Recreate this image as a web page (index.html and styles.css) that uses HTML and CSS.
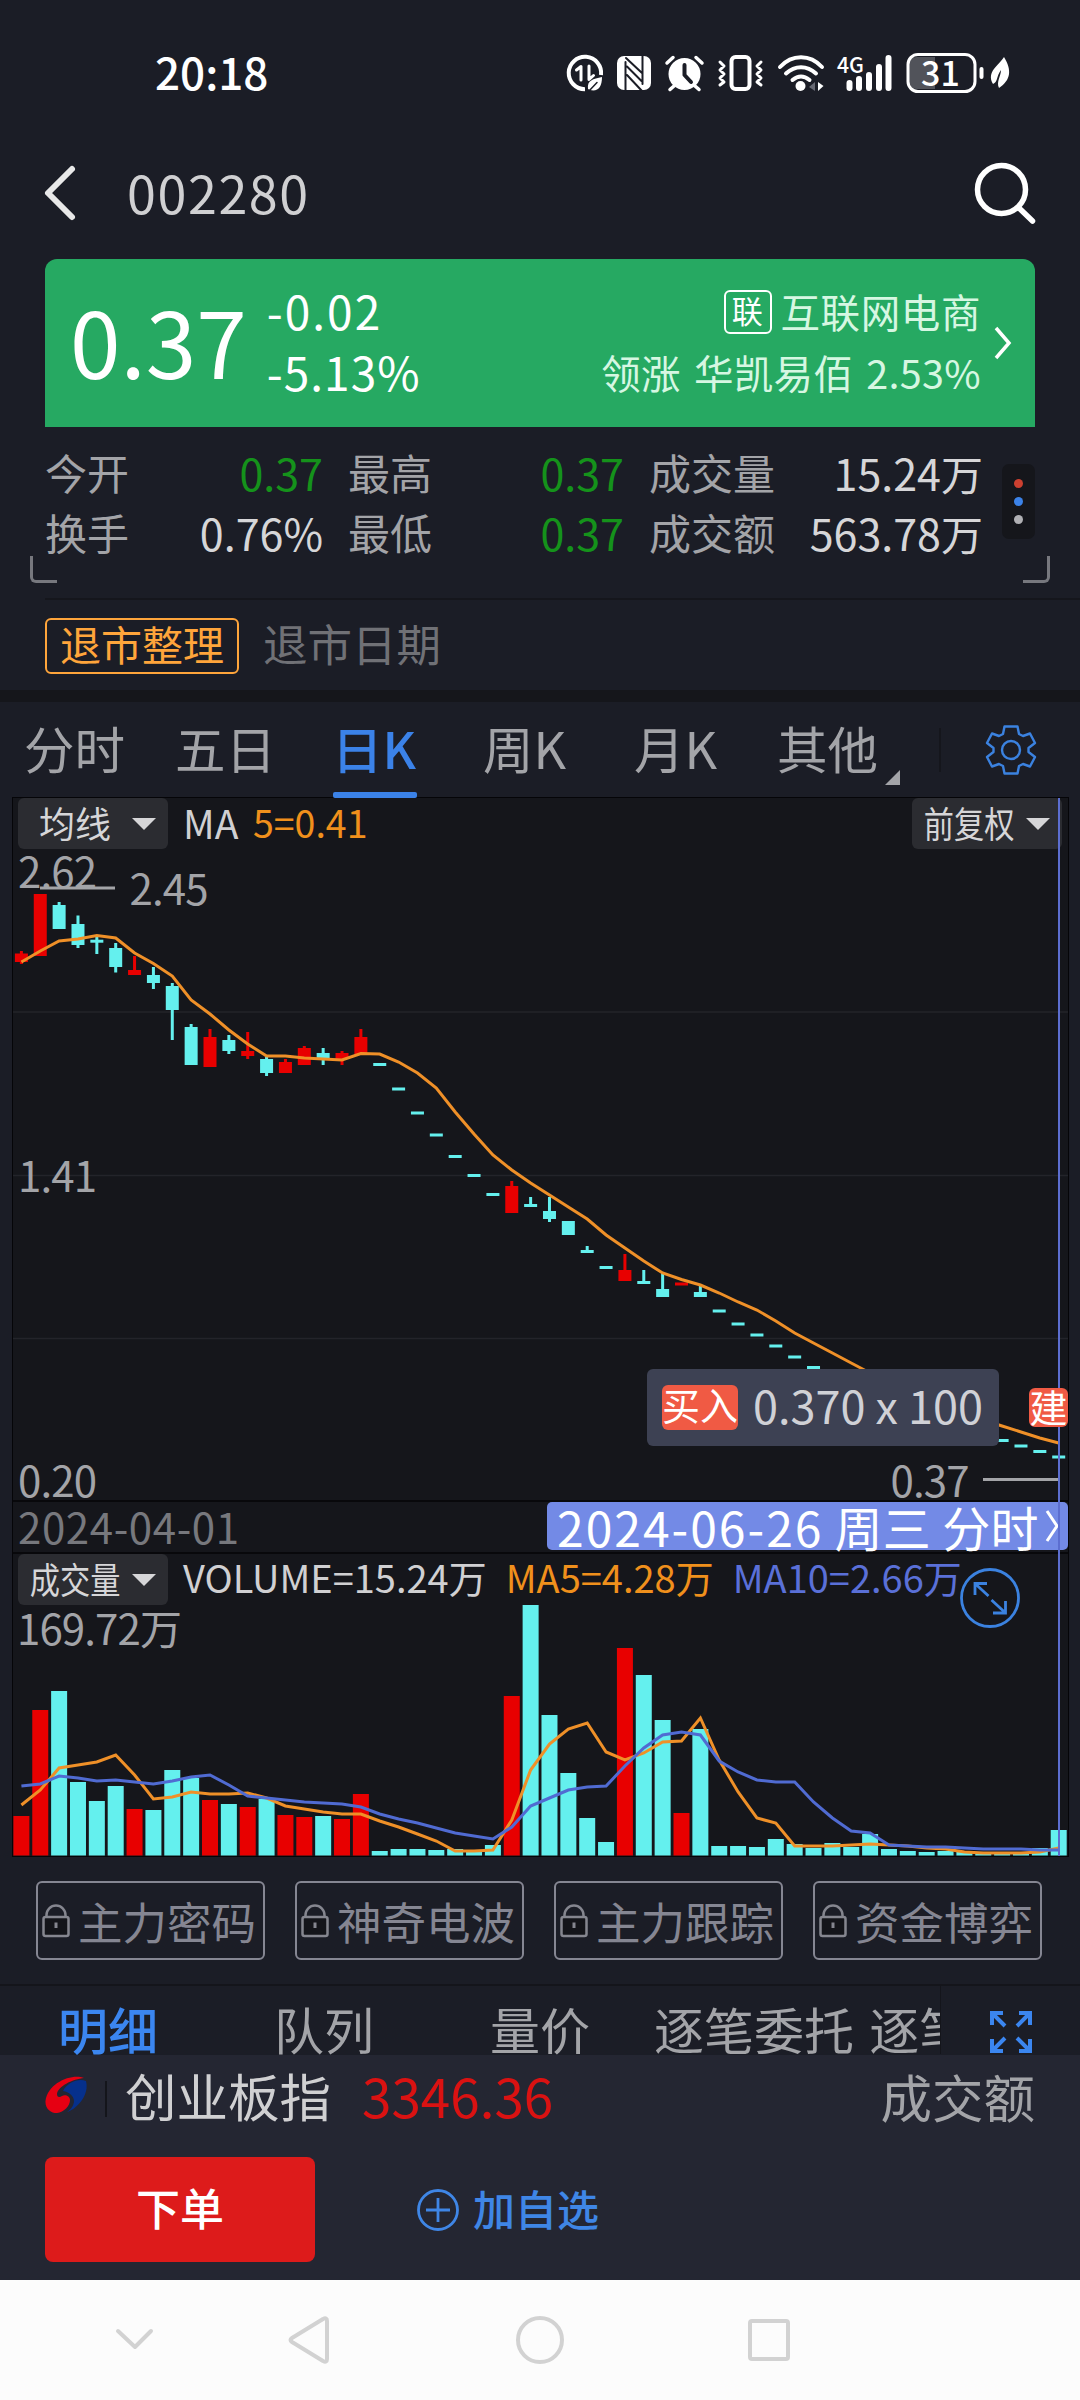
FILE: index.html
```
<!DOCTYPE html>
<html lang="zh-CN">
<head>
    <meta charset="UTF-8">
    <meta name="viewport" content="width=device-width, initial-scale=1.0">
    <title>002280</title>
    <link rel="stylesheet" href="styles.css">
</head>
<body>
    <!-- status bar -->
    <div class="status-bar">
        <span class="clock">20:18</span>
        <svg class="status-icons" width="450" height="44" viewBox="564 51 450 44" fill="none" stroke="#fff" stroke-linecap="round" stroke-linejoin="round">
            <!-- data saver -->
            <path d="M585 89.200A16.200 16.200 0 1 1 601 75" stroke-width="4" stroke-linecap="butt"/>
            <path d="M576.500 70L581 66.500V80M589 66V79.500L593.500 75.500" stroke-width="3"/>
            <path d="M588 89C587 80 593 79 602 77C602 87 598 92 590 90Z" fill="#fff" stroke="none"/>
            <path d="M589 91L597 82.500" stroke="#1b1d26" stroke-width="1.500"/>
            <!-- nfc -->
            <rect x="617" y="56" width="34" height="34" rx="7" fill="#fff" stroke="none"/>
            <path d="M625.500 62V91M642.500 55V84M626 58L642 73M627 66.500L641.500 81M627 75L642 91" stroke="#1b1d26" stroke-width="2"/>
            <!-- alarm -->
            <circle cx="684.500" cy="74" r="16" fill="#fff" stroke="none"/>
            <path d="M667 63L673 57.500M702 63L696 57.500M674 86L670 89.500M695 86L699 89.500" stroke-width="3.500"/>
            <path d="M684.500 65V75L691 82" stroke="#1b1d26" stroke-width="4"/>
            <!-- vibrate -->
            <rect x="731.500" y="57" width="18" height="32" rx="4" stroke-width="4"/>
            <path d="M720 62L724 66L720 70L724 74L720 78L724 82L720 85M761 62L757 66L761 70L757 74L761 78L757 82L761 85" stroke-width="3"/>
            <!-- wifi -->
            <path d="M780 67C792 54 810 54 822 67M786 73.500C795 65 807 65 816 73.500M792.500 80C798 75.500 804 75.500 809.500 80" stroke-width="4"/>
            <circle cx="800.500" cy="86" r="5" fill="#fff" stroke="none"/>
            <path d="M809 87L815 82V91Z" stroke="none" fill="#666872"/>
            <path d="M818 82V91L823.500 86Z" fill="#fff" stroke="none"/>
            <!-- signal -->
            <path d="M849.500 83V88M859 79V88M869 75V88M879 67V88M888.500 58V88" stroke-width="6"/>
            <!-- battery -->
            <path d="M935 57H917Q909 57 909 65V80Q909 89 917 89H935Z" fill="#51535a" stroke="none"/>
            <rect x="908" y="54.500" width="67" height="37" rx="10" stroke-width="3"/>
            <path d="M981.500 69V77" stroke-width="4"/>
            <path d="M1004 57C1012 70 1011 80 999 88C996 82 1001 76 1001 70C996 77 998 82 993 84C986 72 999 65 1004 57Z" fill="#fff" stroke="none"/>
            <g fill="#fff" stroke="none">
                <text x="837" y="73" font-size="22" font-weight="500" textLength="27" lengthAdjust="spacingAndGlyphs">4G</text>
                <text x="921" y="85.500" font-size="34" font-weight="500" textLength="39">31</text>
            </g>
        </svg>
    </div>

    <!-- header -->
    <div class="header">
        <svg width="34" height="60" viewBox="43 163 34 60" fill="none" stroke="#e8e8e8" stroke-width="6" stroke-linecap="round" stroke-linejoin="round"><path d="M72 169L48 193L72 217"/></svg>
        <span class="code">002280</span>
        <svg class="search" width="64" height="64" viewBox="973 161 64 64" fill="none" stroke="#fff" stroke-width="5.500" stroke-linecap="round"><circle cx="1001.500" cy="189.500" r="24"/><path d="M1019 208L1032.500 221"/></svg>
    </div>

    <!-- quote -->
    <div class="quote">
        <div class="price">0.37</div>
        <div class="change">
            <span>-0.02</span>
            <span>-5.13%</span>
        </div>
        <div class="sector">
            <div class="sector-name"><span class="badge">联</span>互联网电商</div>
            <div class="leader">领涨 华凯易佰 <span>2.53%</span></div>
        </div>
        <svg width="20" height="36" viewBox="0 0 20 36" fill="none" stroke="#fff" stroke-width="3.500"><path d="M3 3L16 18L3 33"/></svg>
    </div>
    <div class="stats">
        <div class="stats-grid">
            <span>今开</span><b class="down">0.37</b><span class="gap">最高</span><b class="down">0.37</b><span class="gap">成交量</span><b>15.24<i>万</i></b>
            <span>换手</span><b>0.76%</b><span class="gap">最低</span><b class="down">0.37</b><span class="gap">成交额</span><b>563.78<i>万</i></b>
        </div>
        <div class="dots"><i></i><i></i><i></i></div>
        <div class="corner left"></div>
        <div class="corner right"></div>
    </div>
    <div class="notice">
        <span class="tag">退市整理</span>
        <span class="notice-text">退市日期</span>
    </div>

    <!-- period tabs -->
    <div class="tabs">
        <span>分时</span>
        <span>五日</span>
        <span class="active">日K</span>
        <span>周K</span>
        <span>月K</span>
        <span class="more">其他</span>
        <div class="setting">
            <svg width="52" height="52" viewBox="-26 -26 52 52" fill="none" stroke="#3b82e0" stroke-width="2.400" stroke-linejoin="round"><circle r="9"/><path d="M-6.500 -23.500H6.500L8 -16L12 -14L19 -16.500L24 -7L17.500 -2V2L24 7L19 16.500L12 14L8 16L6.500 23.500H-6.500L-8 16L-12 14L-19 16.500L-24 7L-17.500 2V-2L-24 -7L-19 -16.500L-12 -14L-8 -16Z"/></svg>
        </div>
    </div>

    <!-- charts -->
    <div class="charts">
        <div class="kline">
            <div class="chart-head">
                <span class="select"><em class="wide">均线</em></span>
                <span class="ma">MA</span>
                <span class="ma5">5=0.41</span>
                <span class="select right"><em>前复权</em></span>
            </div>
            <svg id="kline" width="1055" height="704" viewBox="13 798 1055 704">
                <path d="M13 1012H1068M13 1175.500H1068M13 1338.500H1068" stroke="#23242a" stroke-width="1.500"/>
                <g id="candles"></g>
                <polyline id="ma5" fill="none" stroke="#ef9028" stroke-width="3"/>
                <path d="M40 888H115M983 1479.500H1058" stroke="#a3a4a8" stroke-width="3"/>
                <g fill="#a3a4a8" font-size="42">
                    <text x="18" y="887.500" textLength="79">2.62</text>
                    <text x="129.500" y="905" textLength="79">2.45</text>
                    <text x="18" y="1192" textLength="79">1.41</text>
                    <text x="18" y="1496.500" textLength="79">0.20</text>
                    <text x="890.500" y="1496.500" textLength="79">0.37</text>
                </g>
            </svg>
            <div class="trade">
                <span class="buy">买入</span>
                <span>0.370 x 100</span>
            </div>
            <span class="build">建</span>
        </div>
        <div class="dates">
            <span>2024-04-01</span>
            <span class="picked"><b>2024-06-26</b> 周三 分时<svg width="16" height="34" viewBox="0 0 16 34" fill="none" stroke="#fff" stroke-width="3"><path d="M3 2L13 17L3 32"/></svg></span>
        </div>
        <div class="volume">
            <div class="chart-head">
                <span class="select"><em>成交量</em></span>
                <span class="vol">VOLUME=15.24万</span>
                <span class="ma5">MA5=4.28万</span>
                <span class="ma10">MA10=2.66万</span>
            </div>
            <svg width="1055" height="302" viewBox="13 1554 1055 302">
                <g id="bars"></g>
                <polyline id="vol5" fill="none" stroke="#ef9028" stroke-width="3"/>
                <polyline id="vol10" fill="none" stroke="#506bd2" stroke-width="3"/>
                <text x="17" y="1645" fill="#a3a4a8" font-size="42" textLength="165">169.72万</text>
                <g fill="none" stroke="#3b82e0" stroke-width="2.800"><circle cx="990" cy="1598" r="28.500"/><path d="M975 1595V1583.500H987M975.500 1584L988.500 1596M993 1613H1005.500V1601M1005 1612.500L991.500 1600"/></g>
            </svg>
        </div>
        <div class="cursor"></div>
    </div>

    <!-- locked indicators -->
    <div class="locks">
        <div class="lock"><svg width="28" height="34" viewBox="0 0 28 34"><use href="#lock"/></svg>主力密码</div>
        <div class="lock"><svg width="28" height="34" viewBox="0 0 28 34"><use href="#lock"/></svg>神奇电波</div>
        <div class="lock"><svg width="28" height="34" viewBox="0 0 28 34"><use href="#lock"/></svg>主力跟踪</div>
        <div class="lock"><svg width="28" height="34" viewBox="0 0 28 34"><use href="#lock"/></svg>资金博弈</div>
    </div>
    <svg class="defs" width="0" height="0">
        <symbol id="lock" viewBox="0 0 28 34"><g fill="none" stroke="#85868f" stroke-width="2.500"><path d="M4.500 13V11A9.500 9.500 0 0 1 23.500 11V13"/><rect x="1.500" y="13" width="25" height="19" rx="2" fill="#14151a"/><path d="M14 18.500V24" stroke-width="3"/></g></symbol>
    </svg>

    <!-- detail tabs -->
    <div class="detail-tabs">
        <span class="active">明细</span>
        <span>队列</span>
        <span>量价</span>
        <span class="cut">逐笔委托 逐笔</span>
        <svg width="44" height="44" viewBox="0 0 44 44" fill="none" stroke="#3b86f0" stroke-width="4"><path d="M3 15V3H14M4 4L16 16M30 3H41V15M40 4L28 16M3 29V41H14M4 40L16 28M30 41H41V29M40 40L28 28"/></svg>
    </div>

    <!-- bottom bar -->
    <div class="bottom">
        <div class="index-row">
            <svg width="42" height="38" viewBox="0 0 42 38"><path d="M39 2C28 -3 3 6 0.500 25C0 33 6 37 12 37C19 36 25 30 25 24C25 20 20 18 17 20C14 22 12 21 12 18C13 10 28 3 39 2Z" fill="#e60012"/><path d="M41 5C33 2 22 7 18 15C24 16 29 20 29 25C29 30 25 34 22 36C32 33 43 20 41.500 8Z" fill="#06308c"/></svg>
            <span class="index-name">创业板指</span>
            <span class="index-value">3346.36</span>
            <span class="turnover">成交额</span>
        </div>
        <div class="actions">
            <button class="order">下单</button>
            <span class="add"><svg width="44" height="44" viewBox="0 0 44 44" fill="none" stroke="#3f86e6" stroke-width="2.800"><circle cx="22" cy="22" r="19.500"/><path d="M10 22H34M22 10V34"/></svg><span>加自选</span></span>
        </div>
    </div>

    <!-- system navigation -->
    <div class="nav">
        <svg width="1080" height="120" viewBox="0 2280 1080 120" fill="none" stroke="#d2d2d2" stroke-width="4" stroke-linecap="round" stroke-linejoin="round">
            <path d="M118 2331L135 2347L151 2331"/>
            <path d="M327 2321V2359Q327 2363 323 2361L292 2342Q289 2340 292 2338L323 2319Q327 2317 327 2321Z"/>
            <circle cx="540" cy="2340" r="22"/>
            <rect x="750" y="2321" width="38" height="38" rx="2"/>
        </svg>
    </div>

    <script>
        var STEP = 18.86;
        var FIRST = 21.4;
        var COLORS = { r: '#e80000', c: '#64f0ee' };

        // color, high, body top, body bottom, low
        var candles = [
            ['r', 951, 953.5, 962, 964], ['r', 894, 894, 956, 956], ['c', 902, 905, 929, 929], ['c', 915.5, 924, 945, 948],
            ['c', 937, 939.7, 942.7, 954], ['c', 943, 948, 967, 972.5], ['r', 956, 970, 975, 975], ['c', 967, 975, 983, 989],
            ['c', 983, 986, 1010, 1040], ['c', 1024, 1027, 1065, 1065], ['r', 1029, 1037, 1067, 1067], ['c', 1035, 1040, 1051, 1054],
            ['r', 1032, 1051, 1056, 1059], ['c', 1057, 1059, 1073, 1076], ['r', 1059, 1062, 1073, 1073], ['r', 1046, 1048, 1065, 1065],
            ['c', 1048, 1053, 1059, 1065], ['r', 1051, 1053, 1059, 1065], ['r', 1029, 1037, 1054, 1054], ['c', 1064.5],
            ['c', 1089], ['c', 1113], ['c', 1135], ['c', 1156.5], ['c', 1175.5], ['c', 1194.5],
            ['r', 1181, 1186, 1213, 1213], ['c', 1197, 1204, 1207, 1207], ['c', 1197, 1211, 1219, 1222], ['c', 1221, 1221, 1235, 1235],
            ['c', 1246, 1250, 1253, 1253], ['c', 1267.5], ['r', 1254, 1270, 1281, 1281], ['c', 1270, 1281, 1284, 1284],
            ['c', 1273, 1289, 1297, 1297], ['r', 1284], ['c', 1286, 1292, 1297, 1297], ['c', 1311], ['c', 1324], ['c', 1335],
            ['c', 1346], ['c', 1357], ['c', 1367.5], ['c', 1376], ['c', 1384], ['c', 1392], ['c', 1400], ['c', 1408],
            ['c', 1416], ['c', 1423], ['c', 1430], ['c', 1436], ['c', 1440.5], ['c', 1446], ['c', 1451.5], ['c', 1457]
        ];
        var ma5 = [962, 951, 941, 939, 935.5, 938, 953, 963.5, 976, 1000, 1014, 1030, 1044, 1056, 1056, 1058, 1059, 1060, 1053.5, 1054,
            1062, 1073, 1088, 1112, 1134, 1155, 1170, 1183, 1195, 1207, 1219, 1235, 1248, 1261, 1273, 1279.5, 1285, 1293, 1302, 1310,
            1321, 1333, 1343, 1353, 1363, 1373, 1382, 1391, 1399, 1407, 1414, 1420, 1426, 1432, 1438, 1443];
        var volumes = ['r1816', 'r1710', 'c1691', 'c1782', 'c1801', 'c1786', 'r1809', 'c1810', 'c1770', 'c1778', 'r1800', 'c1804', 'r1807', 'c1799',
            'r1815', 'r1817', 'c1816', 'r1819', 'r1794', 'c1851', 'c1849', 'c1849', 'c1850', 'c1849', 'c1851', 'c1845', 'r1696', 'c1605',
            'c1715', 'c1773', 'c1818', 'c1842', 'r1648', 'c1675', 'c1720', 'r1813', 'c1729', 'c1846', 'c1846', 'c1847', 'c1839', 'c1844',
            'c1848', 'c1843', 'c1847', 'c1834', 'c1849', 'c1851', 'c1852', 'c1851', 'c1852', 'c1853', 'c1852', 'c1852', 'c1848', 'c1830'];
        var vol5 = [1805, 1790, 1768, 1765, 1762, 1755, 1775, 1799, 1797, 1792, 1794, 1794, 1793, 1798, 1806, 1809, 1812, 1814, 1814, 1821,
            1827, 1834, 1841, 1851, 1851, 1850, 1820, 1770, 1744, 1729, 1723, 1752, 1760, 1753, 1742, 1741, 1718, 1760, 1792, 1818,
            1823, 1846, 1846, 1846, 1845, 1844, 1845, 1846, 1848, 1849, 1852, 1853, 1853, 1853, 1852, 1848];
        var vol10 = [1786, 1784, 1776, 1778, 1781, 1780, 1782, 1784, 1781, 1777, 1775, 1785, 1796, 1798, 1800, 1802, 1803, 1804, 1807, 1814,
            1819, 1823, 1828, 1833, 1836, 1839, 1827, 1806, 1798, 1790, 1787, 1786, 1766, 1748, 1735, 1732, 1735, 1761, 1772, 1780,
            1782, 1782, 1802, 1818, 1831, 1833, 1845, 1846, 1847, 1847, 1848, 1849, 1849, 1849, 1850, 1850];

        function rect(x, y, w, h, color) {
            return '<rect x="' + x + '" y="' + y + '" width="' + w + '" height="' + h + '" fill="' + color + '"/>';
        }

        function drawLine(id, values) {
            var points = values.map(function(y, i) {
                return (FIRST + i * STEP).toFixed(1) + ',' + y;
            });
            document.getElementById(id).setAttribute('points', points.join(' '));
        }

        document.getElementById('candles').innerHTML = candles.map(function(c, i) {
            var x = FIRST + i * STEP;
            if (c.length === 2) {
                return rect(x - 6.5, c[1] - 1.5, 13, 3, COLORS[c[0]]);
            }
            return rect(x - 1.5, c[1], 3, c[4] - c[1], COLORS[c[0]]) + rect(x - 6.5, c[2], 13, c[3] - c[2], COLORS[c[0]]);
        }).join('');

        document.getElementById('bars').innerHTML = volumes.map(function(v, i) {
            var y = Number(v.slice(1));
            return rect(FIRST + i * STEP - 8, y, 16, 1855.5 - y, COLORS[v[0]]);
        }).join('');

        drawLine('ma5', ma5);
        drawLine('vol5', vol5);
        drawLine('vol10', vol10);
    </script>
</body>
</html>
```
FILE: styles.css
```
* {
    box-sizing: border-box;
}
body {
    width: 1080px;
    height: 2400px;
    margin: 0;
    overflow: hidden;
    background-color: #1b1d26;
    color: #a3a4a8;
    font-family: "Noto Sans CJK SC", sans-serif;
    font-size: 42px;
}
svg {
    display: block;
    flex: none;
}
b, i, em {
    font-style: normal;
    font-weight: 400;
}
.defs {
    height: 0;
}

/* status bar */
.status-bar {
    display: flex;
    justify-content: space-between;
    height: 146px;
    padding: 51px 66px 0 155px;
}
.clock {
    color: #fff;
    font-size: 44px;
    font-weight: 500;
    line-height: 40px;
}

/* header */
.header {
    display: flex;
    align-items: center;
    height: 113px;
    padding: 0 43px 19px;
}
.code {
    margin: -3px 0 0 50px;
    color: #d0d0d2;
    font-size: 52px;
    line-height: 60px;
    letter-spacing: 1.600px;
}
.search {
    margin-left: auto;
}

/* quote */
.quote {
    display: flex;
    align-items: center;
    height: 168px;
    margin: 0 45px;
    padding: 0 22px 0 25px;
    border-radius: 12px 12px 0 0;
    background-color: #26a962;
    color: #fff;
}
.price {
    font-size: 91px;
    line-height: 130px;
    margin-top: -9px;
}
.change {
    display: flex;
    flex-direction: column;
    margin: -4px 0 0 20px;
    font-size: 46px;
    line-height: 61px;
    letter-spacing: 1px;
}
.change span:first-child {
    letter-spacing: 2px;
}
.sector {
    margin: -5px 12px 0 auto;
    color: #d6f7e2;
    font-size: 39.500px;
    line-height: 61px;
    text-align: right;
}
.sector-name {
    display: flex;
    align-items: center;
    justify-content: flex-end;
    letter-spacing: .600px;
}
.badge {
    width: 48px;
    height: 44px;
    margin: 3px 9px 0 0;
    border: 2px solid #fff;
    border-radius: 6px;
    color: #fff;
    font-size: 31px;
    line-height: 36px;
    text-align: center;
}
.leader {
    letter-spacing: .300px;
    word-spacing: 4px;
}

/* stats */
.stats {
    position: relative;
    display: flex;
    height: 173px;
    margin-left: 45px;
    padding-top: 15px;
    border-bottom: 2px solid #15161c;
}
.stats-grid {
    display: grid;
    grid-template-columns: 86px 192px 110px 191px 153px 206px;
    grid-auto-rows: 60px;
    width: 938px;
    line-height: 60px;
    white-space: nowrap;
}
.stats-grid b {
    color: #d6d6d8;
    font-size: 43px;
    text-align: right;
}
.stats-grid .gap {
    padding-left: 25px;
}
.stats-grid i {
    font-size: 42px;
}
.stats-grid .down {
    color: #15921b;
}
.dots {
    display: flex;
    flex-direction: column;
    align-items: center;
    justify-content: center;
    gap: 9px;
    width: 33px;
    height: 75px;
    margin: 22px 0 0 19px;
    border-radius: 7px;
    background-color: #15161b;
}
.dots i {
    width: 9px;
    height: 9px;
    border-radius: 50%;
    background-color: #cc4030;
}
.dots i:nth-child(2) {
    background-color: #3b82e8;
}
.dots i:nth-child(3) {
    background-color: #b0b0b4;
}
.corner {
    position: absolute;
    top: 129px;
    width: 27px;
    height: 27px;
    border: 0 solid #77787e;
    border-bottom-width: 3px;
}
.corner.left {
    left: -15px;
    border-left-width: 3px;
    border-bottom-left-radius: 6px;
}
.corner.right {
    right: 30px;
    border-right-width: 3px;
    border-bottom-right-radius: 6px;
}

/* notice */
.notice {
    display: flex;
    align-items: center;
    height: 102px;
    padding: 2px 45px 0;
    border-bottom: 12px solid #15161b;
}
.tag {
    width: 194px;
    height: 56px;
    border: 2px solid #ffa53b;
    border-radius: 6px;
    color: #ffa53b;
    font-size: 41px;
    line-height: 47px;
    text-align: center;
}
.notice-text {
    margin: -6px 0 0 24px;
    color: #707176;
    font-size: 44.500px;
    line-height: 56px;
}

/* period tabs */
.tabs {
    display: flex;
    align-items: center;
    height: 95px;
    padding-left: 24px;
    font-size: 50.500px;
}
.tabs span {
    position: relative;
    width: 151px;
    height: 95px;
    line-height: 91px;
}
.tabs .active {
    color: #3b82e8;
    font-weight: 500;
}
.tabs span:nth-child(2) {
    width: 157px;
}
.tabs span.active::after {
    content: "";
    position: absolute;
    z-index: 2;
    left: 1px;
    bottom: -1px;
    width: 84px;
    height: 6px;
    border-radius: 2px;
    background-color: #3b82e8;
}
.tabs .more {
    width: 122px;
    margin-left: -9px;
}
.tabs span:nth-child(5) {
    width: 152px;
}
.tabs .more::after {
    content: "";
    position: absolute;
    right: -1px;
    bottom: 12px;
    border-left: 15px solid transparent;
    border-bottom: 15px solid #a3a4a8;
}
.setting {
    display: flex;
    align-items: center;
    justify-content: flex-end;
    width: 98px;
    height: 44px;
    margin-left: auto;
    margin-right: 43px;
    border-left: 2px solid #15161c;
}

/* charts */
.charts {
    position: relative;
    width: 1057px;
    height: 1060px;
    margin-left: 12px;
    border: 1px solid #050508;
    background-color: #15161b;
}
.kline {
    position: relative;
    height: 704px;
    border-bottom: 2px solid #08080b;
    overflow: hidden;
}
.chart-head {
    position: absolute;
    left: 5px;
    right: 6px;
    top: 0;
    display: flex;
    height: 51px;
    font-size: 38px;
    line-height: 48px;
    white-space: nowrap;
}
.volume .chart-head {
    line-height: 45px;
}
.chart-head .ma,
.chart-head .vol {
    margin-left: 15px;
    color: #d0d0d2;
}
.chart-head .ma {
    width: 70px;
    font-size: 39px;
}
.chart-head .ma5 {
    color: #f0901c;
}
.kline .ma5 {
    font-size: 37.500px;
}
.volume .ma5 {
    margin-left: 19px;
}
.chart-head .ma10 {
    margin-left: 19px;
    color: #5a70d8;
}
.select {
    display: flex;
    align-items: center;
    width: 150px;
    border-radius: 6px;
    background-color: #2b2c31;
    color: #d6d6d8;
    font-size: 36px;
    line-height: 46px;
}
.select em {
    width: 114px;
    padding-left: 14px;
    transform: scaleX(.84);
    transform-origin: 0 0;
    height: 50px;
}
.select em.wide {
    padding-left: 21px;
    transform: none;
}
.select::after {
    content: "";
    border: 12px solid transparent;
    border-top-color: #d6d6d8;
    border-bottom: 0;
}
.select.right {
    margin-left: auto;
}
.trade {
    position: absolute;
    left: 634px;
    top: 571px;
    display: flex;
    align-items: center;
    gap: 15px;
    width: 352px;
    height: 77px;
    padding-left: 15px;
    border-radius: 6px;
    background-color: #3d4153;
    color: #d0d1d6;
    font-size: 45px;
    line-height: 71px;
    white-space: nowrap;
}
.trade span:last-child {
    height: 77px;
}
.buy,
.build {
    width: 76px;
    height: 45px;
    border-radius: 6px;
    background-color: #f05a44;
    color: #fff;
    font-size: 38px;
    line-height: 38px;
    text-align: center;
}
.build {
    position: absolute;
    z-index: 3;
    left: 1016px;
    top: 590px;
    width: 39px;
    height: 39px;
    line-height: 35px;
}
.dates {
    display: flex;
    justify-content: space-between;
    height: 52px;
    padding-left: 5px;
    border-bottom: 2px solid #08080b;
    color: #77787d;
    line-height: 48px;
    letter-spacing: .600px;
}
.picked {
    display: flex;
    align-items: center;
    width: 521px;
    height: 48px;
    padding-left: 10px;
    border-radius: 5px;
    background-color: #738ae6;
    color: #fff;
    font-size: 48px;
    line-height: 38px;
    letter-spacing: .300px;
    white-space: pre;
}
.picked b {
    letter-spacing: 2px;
}
.picked svg {
    margin-left: 5px;
}
.volume {
    position: relative;
    height: 302px;
}
.cursor {
    position: absolute;
    left: 1045px;
    top: 0;
    width: 2px;
    height: 1058px;
    background-color: #5c6ed0;
}

/* locked indicators */
.locks {
    display: flex;
    gap: 30px;
    height: 129px;
    padding: 24px 36px 0;
    border-bottom: 2px solid #14151b;
}
.lock {
    display: flex;
    align-items: center;
    gap: 8px;
    width: 229px;
    height: 79px;
    padding-left: 4px;
    border: 2px solid #858692;
    border-radius: 6px;
    color: #858692;
    font-size: 44.500px;
    line-height: 69px;
    white-space: nowrap;
}

/* detail tabs */
.detail-tabs {
    display: flex;
    align-items: center;
    height: 69px;
    padding-left: 58px;
    font-size: 50px;
    line-height: 87px;
    overflow: hidden;
}
.detail-tabs span {
    width: 216px;
    height: 69px;
    margin-top: -2px;
}
.detail-tabs .active {
    color: #3b86f0;
    font-weight: 500;
}
.detail-tabs span:nth-child(3) {
    width: 164px;
}
.detail-tabs .cut {
    width: 287px;
    overflow: hidden;
    white-space: nowrap;
    word-spacing: 4px;
    border-right: 1px solid #14151b;
}
.detail-tabs svg {
    margin: 23px 0 0 48px;
}

/* bottom bar */
.bottom {
    height: 225px;
    padding: 0 45px;
    background-color: #242632;
}
.index-row {
    display: flex;
    align-items: center;
    height: 102px;
    padding-bottom: 22px;
    font-size: 51.500px;
}
.index-name {
    margin-left: 18px;
    padding-left: 20px;
    color: #d0d0d2;
    background: linear-gradient(#14151b, #14151b) 0 60% / 2px 36px no-repeat;
    line-height: 78px;
}
.index-value {
    margin-left: 31px;
    color: #da1212;
    font-size: 53px;
}
.turnover {
    margin-left: auto;
}
.actions {
    display: flex;
    align-items: center;
}
.order {
    width: 270px;
    height: 105px;
    padding: 0 0 5px;
    border: none;
    border-radius: 8px;
    background-color: #dd1b1b;
    color: #fff;
    font-family: inherit;
    font-size: 44px;
    font-weight: 500;
}
.add {
    display: flex;
    align-items: center;
    gap: 13px;
    margin-left: 101px;
    color: #3f86e6;
    font-weight: 500;
}
.add span {
    margin-top: -4px;
}

/* system navigation */
.nav {
    background-color: #fcfcfc;
}
```
